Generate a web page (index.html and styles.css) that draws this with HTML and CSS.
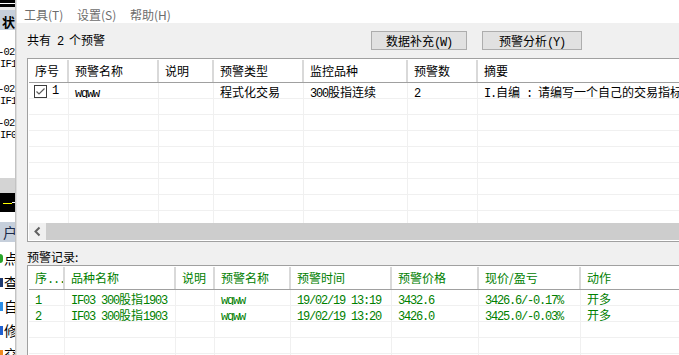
FILE: index.html
```html
<!DOCTYPE html>
<html>
<head>
<meta charset="utf-8">
<link rel="stylesheet" href="styles.css">
</head>
<body>
<div class="screen">
  <aside class="behind">
    <div class="bk-top"></div>
    <div class="bk-gap"></div>
    <div class="bk-hdr">状态</div>
    <div class="bk-log">
      <div class="bk-entry e1"><div class="neg">-02</div><div>IF1</div></div>
      <div class="bk-entry e2"><div class="neg">-02</div><div>IF1</div></div>
      <div class="bk-entry e3"><div class="neg">-02</div><div>IF0</div></div>
    </div>
    <div class="bk-grey"></div>
    <div class="bk-black"></div>
    <div class="bk-white"></div>
    <div class="bk-hdr2">户</div>
    <ul class="bk-items">
      <li><i class="ic ic-green"></i>点</li>
      <li><i class="ic ic-navy"></i>查</li>
      <li><i class="ic ic-blue"></i>自</li>
      <li><i class="ic ic-blue2"></i>修</li>
      <li><i class="ic ic-orange"></i>交</li>
    </ul>
  </aside>
  <div class="edge"></div>
  <main class="dialog">
    <nav class="menubar"><span>工具(T)</span><span>设置(S)</span><span>帮助(H)</span></nav>
    <section class="body">
      <div class="toolbar">
        <div class="count">共有<span class="m"> 2 </span>个预警</div>
        <button class="btn b1">数据补充<span class="m">(W)</span></button>
        <button class="btn b2">预警分析<span class="m">(Y)</span></button>
      </div>

      <div class="list l1">
        <div class="view">
          <div class="row head">
            <div>序号</div><div>预警名称</div><div>说明</div><div>预警类型</div><div>监控品种</div><div>预警数</div><div>摘要</div>
          </div>
          <div class="row">
            <div class="chk"><svg width="13" height="13" viewBox="0 0 13 13"><rect x="0.5" y="0.5" width="12" height="12" fill="#fff" stroke="#3c3c3c"/><path d="M2.5 6.5 L5 9 L10.5 3.5" fill="none" stroke="#5a5a5a" stroke-width="1.2"/></svg><span class="m">1</span></div>
            <div><span class="m">wqww</span></div>
            <div></div>
            <div>程式化交易</div>
            <div><span class="m">300</span>股指连续</div>
            <div><span class="m">2</span></div>
            <div><span class="m">I.</span>自编<span class="m"> : </span>请编写一个自己的交易指标公式</div>
          </div>
          <div class="row"><div></div><div></div><div></div><div></div><div></div><div></div><div></div></div>
          <div class="row"><div></div><div></div><div></div><div></div><div></div><div></div><div></div></div>
          <div class="row"><div></div><div></div><div></div><div></div><div></div><div></div><div></div></div>
          <div class="row"><div></div><div></div><div></div><div></div><div></div><div></div><div></div></div>
          <div class="row"><div></div><div></div><div></div><div></div><div></div><div></div><div></div></div>
          <div class="row"><div></div><div></div><div></div><div></div><div></div><div></div><div></div></div>
          <div class="row"><div></div><div></div><div></div><div></div><div></div><div></div><div></div></div>
          <div class="row"><div></div><div></div><div></div><div></div><div></div><div></div><div></div></div>
        </div>
        <div class="hscroll">
          <div class="arrow"><svg width="17" height="17" viewBox="0 0 17 17"><path d="M10.5 4.5 L6.5 8.5 L10.5 12.5" fill="none" stroke="#606060" stroke-width="2"/></svg></div>
          <div class="thumb"></div>
        </div>
      </div>

      <div class="label">预警记录:</div>

      <div class="list l2">
        <div class="row head">
          <div>序<span class="m">...</span></div><div>品种名称</div><div>说明</div><div>预警名称</div><div>预警时间</div><div>预警价格</div><div>现价/盈亏</div><div>动作</div>
        </div>
        <div class="row">
          <div><span class="m">1</span></div>
          <div><span class="m">IF03 300</span>股指<span class="m">1903</span></div>
          <div></div>
          <div><span class="m">wqww</span></div>
          <div><span class="m">19/02/19 13:19</span></div>
          <div><span class="m">3432.6</span></div>
          <div><span class="m">3426.6/-0.17%</span></div>
          <div>开多</div>
        </div>
        <div class="row">
          <div><span class="m">2</span></div>
          <div><span class="m">IF03 300</span>股指<span class="m">1903</span></div>
          <div></div>
          <div><span class="m">wqww</span></div>
          <div><span class="m">19/02/19 13:20</span></div>
          <div><span class="m">3426.0</span></div>
          <div><span class="m">3425.0/-0.03%</span></div>
          <div>开多</div>
        </div>
        <div class="row"><div></div><div></div><div></div><div></div><div></div><div></div><div></div><div></div></div>
        <div class="row"><div></div><div></div><div></div><div></div><div></div><div></div><div></div><div></div></div>
        <div class="row"><div></div><div></div><div></div><div></div><div></div><div></div><div></div><div></div></div>
      </div>
    </section>
  </main>
</div>
</body>
</html>
```
FILE: styles.css
```css
* { box-sizing: border-box; }

body {
  margin: 0;
  width: 679px;
  height: 355px;
  overflow: hidden;
  font-family: "Noto Sans CJK SC", "Noto Sans", sans-serif;
  font-size: 12px;
  color: #000;
  background: #f0f0f0;
}

.m {
  font-family: "Liberation Mono", monospace;
  letter-spacing: -1.2px;
}

.screen {
  display: flex;
  height: 355px;
}

/* ---- window behind (left strip) ---- */
.behind {
  flex: 0 0 15px;
  width: 15px;
  overflow: hidden;
  background: #fff;
  display: flex;
  flex-direction: column;
  white-space: nowrap;
}
.bk-top {
  flex: 0 0 7px;
  background: linear-gradient(#000 0 3px, #fff 3px 4px, #000 4px 7px);
}
.bk-gap { flex: 0 0 3px; background: #e6e6e6; }
.bk-hdr {
  flex: 0 0 20px;
  background: #c6cfdb;
  font-size: 13px;
  font-weight: bold;
  line-height: 16px;
  padding: 4px 0 0 2px;
}
.bk-log { flex: 0 0 148px; }
.bk-entry {
  font-family: "Liberation Mono", monospace;
  letter-spacing: -0.8px;
  font-size: 10.5px;
  line-height: 12px;
}
.e1 { margin-top: 16px; }
.e2 { margin-top: 13px; }
.e3 { margin-top: 10px; }
.neg { margin-left: -2px; }
.bk-grey { flex: 0 0 15px; background: #d4d4d4; }
.bk-black {
  flex: 0 0 19px;
  background:
    linear-gradient(#ffff00, #ffff00) 3px 10px / 9px 1px no-repeat,
    linear-gradient(#fff, #fff) 12px 9px / 3px 1px no-repeat,
    #000;
}
.bk-white { flex: 0 0 10px; background: #fff; }
.bk-hdr2 {
  flex: 0 0 20px;
  background: #c6cfdb;
  font-size: 14px;
  line-height: 20px;
  padding-left: 3px;
  color: #1a2a4a;
}
.bk-items {
  list-style: none;
  margin: 0;
  padding: 4px 0 0;
  font-size: 14px;
}
.bk-items li {
  height: 24px;
  display: flex;
  align-items: center;
}
.ic {
  flex: none;
  width: 3px;
  height: 9px;
  margin-right: 1px;
}
.ic-green { background: #2aa52a; border-radius: 0 4px 4px 0; }
.ic-navy { background: #1f3a70; }
.ic-blue { background: #2a8ee6; }
.ic-blue2 { background: #2060d0; }
.ic-orange { background: #f08a20; }

.edge {
  flex: 0 0 2px;
  background: linear-gradient(to right, #c3c3c3 1px, #dcdcdc 1px);
}

/* ---- dialog ---- */
.dialog {
  flex: 1;
  min-width: 0;
  overflow: hidden;
  display: flex;
  flex-direction: column;
}
.menubar {
  flex: 0 0 23px;
  background: #fff;
  display: flex;
  padding: 6px 0 0 7px;
  line-height: 17px;
  color: #6d6d6d;
}
.menubar span { width: 53px; flex: none; }

.body {
  flex: 1;
  display: flex;
  flex-direction: column;
  align-items: flex-start;
  padding-left: 10px;
}
.toolbar {
  flex: 0 0 35px;
  display: flex;
  align-items: center;
}
.count {
  width: 344px;
  line-height: 17px;
}
.btn {
  height: 19px;
  padding: 0;
  border: 1px solid #adadad;
  background: #e1e1e1;
  font-family: "Noto Sans CJK SC", sans-serif;
  font-size: 12px;
  line-height: 17px;
  color: #000;
}
.b1 { width: 96px; }
.b2 { width: 100px; margin-left: 15px; }

.list {
  flex: none;
  width: 760px;
  border: 1px solid #a0a0a0;
  padding: 1px;
  background: #fff;
}
.l1 .view {
  height: 163px;
  overflow: hidden;
}
.row {
  display: grid;
  height: 16px;
  border-bottom: 1px solid #f0f0f0;
}
.l1 .row { grid-template-columns: 40px 90px 55px 90px 104px 70px 300px; }
.l2 .row { grid-template-columns: 36px 111px 39px 76px 101px 87px 102px 200px; }
.row > div {
  border-right: 1px solid #f0f0f0;
  padding: 1px 0 0 6px;
  line-height: 15px;
  white-space: nowrap;
  overflow: hidden;
}
.row.head {
  height: 23px;
  border-bottom: 1px solid #a0a0a0;
}
.row.head > div {
  border-right: 2px solid #d9d9d9;
  padding: 0 0 0 6px;
  line-height: 22px;
  color: #000;
}
.l2 .row > div { color: #008000; }
.row > .chk {
  display: flex;
  align-items: flex-start;
  gap: 5px;
  padding: 2px 0 0 5px;
}
.chk svg { flex: none; display: block; }
.chk .m { line-height: 13px; }

.hscroll {
  height: 17px;
  display: flex;
}
.arrow {
  flex: 0 0 17px;
  background: #f0f0f0;
}
.arrow svg { display: block; }
.thumb {
  flex: 1;
  background: #cdcdcd;
}

.label {
  flex: 0 0 22px;
  padding-top: 6px;
  line-height: 17px;
}
```
